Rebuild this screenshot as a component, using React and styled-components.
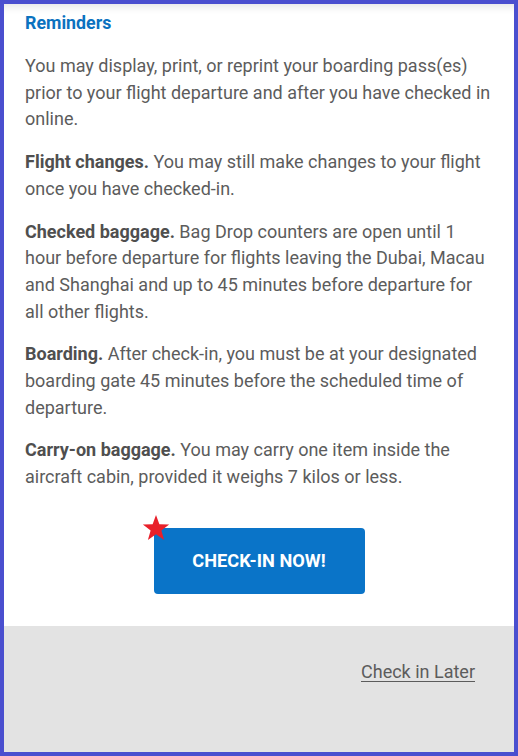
import React from 'react';
import styled, { createGlobalStyle } from 'styled-components';

const GlobalStyle = createGlobalStyle`
    html, body {
        margin: 0;
        padding: 0;
        background: #ffffff;
    }
    * {
        box-sizing: border-box;
    }
`;

const App = () => {
    return (
        <Frame>
            <GlobalStyle />

            <Content>
                <Heading>Reminders</Heading>

                <Paragraph>
                    You may display, print, or reprint your boarding pass(es) prior to your flight departure and after you have checked in online.
                </Paragraph>

                <Paragraph>
                    <b>Flight changes.</b> You may still make changes to your flight once you have checked-in.
                </Paragraph>

                <Paragraph>
                    <b>Checked baggage.</b> Bag Drop counters are open until 1 hour before departure for flights leaving the Dubai, Macau and Shanghai and up to 45 minutes before departure for all other flights.
                </Paragraph>

                <Paragraph>
                    <b>Boarding.</b> After check-in, you must be at your designated boarding gate 45 minutes before the scheduled time of departure.
                </Paragraph>

                <Paragraph>
                    <b>Carry-on baggage.</b> You may carry one item inside the aircraft cabin, provided it weighs 7 kilos or less.
                </Paragraph>

                <ButtonRow>
                    <CheckInButton>
                        <Star viewBox="0 0 24 24">
                            <path d="M12 1.5l2.7 7.4 7.8.2-6.2 4.8 2.2 7.6L12 17l-6.5 4.5 2.2-7.6L1.5 9.1l7.8-.2z" fill="#e8202a" />
                        </Star>
                        CHECK-IN NOW!
                    </CheckInButton>
                </ButtonRow>
            </Content>

            <Footer>
                <LaterLink href="#">Check in Later</LaterLink>
            </Footer>
        </Frame>
    );
};

const Frame = styled.div`
    width: 518px;
    height: 756px;
    border: 4px solid #4a4fcf;
    display: flex;
    flex-direction: column;
    font-family: Roboto, "Liberation Sans", sans-serif;
    overflow: hidden;
`;

const Content = styled.div`
    background: #ffffff;
    padding: 9px 22px 32px 21px;
    box-shadow: inset 0 10px 10px -8px rgba(0, 0, 0, 0.12);
`;

const Heading = styled.h2`
    margin: 0 0 20px 0;
    font-size: 17.8px;
    font-weight: 700;
    color: #0b72bf;
    line-height: 20px;
`;

const Paragraph = styled.p`
    margin: 0 0 16px 0;
    font-size: 18px;
    line-height: 26.7px;
    color: #5c5c5c;

    b {
        font-weight: 700;
        color: #4f4f4f;
    }
`;

const ButtonRow = styled.div`
    display: flex;
    justify-content: center;
    padding: 21px 0 0 1px;
`;

const CheckInButton = styled.button`
    position: relative;
    width: 211px;
    height: 66px;
    border: none;
    border-radius: 4px;
    background: #0a74c8;
    color: #ffffff;
    font-family: Roboto, "Liberation Sans", sans-serif;
    font-size: 18.2px;
    font-weight: 700;
    cursor: pointer;
`;

const Star = styled.svg`
    position: absolute;
    left: -13px;
    top: -15px;
    width: 30px;
    height: 30px;
`;

const Footer = styled.div`
    flex: 1;
    background: #e3e3e3;
    display: flex;
    justify-content: flex-end;
    align-items: flex-start;
    padding: 35px 39px 0 0;
`;

const LaterLink = styled.a`
    color: #5c5c5c;
    font-size: 18px;
    text-decoration: underline;
    text-underline-offset: 3px;
`;

export default App;
